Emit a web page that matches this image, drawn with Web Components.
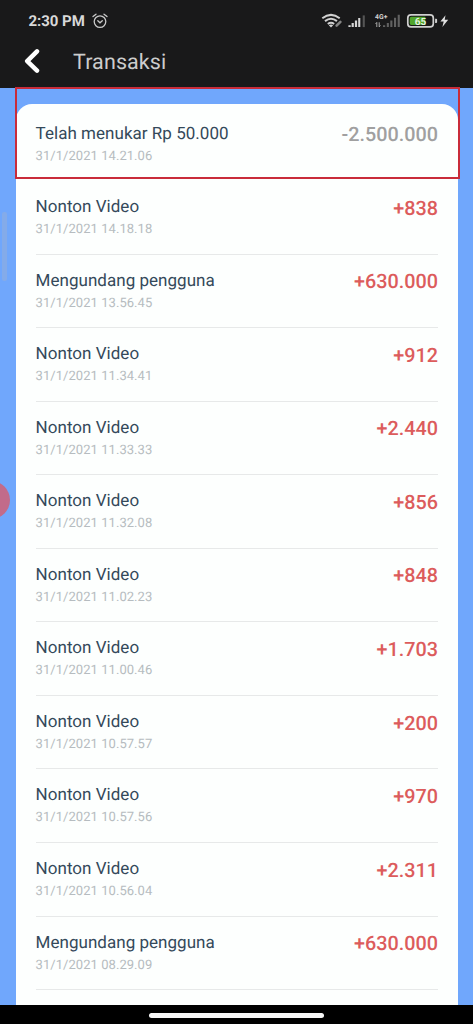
<!DOCTYPE html>
<html lang="id">
<head>
<meta charset="utf-8">
<title>Transaksi</title>
<style>
html,body{margin:0;height:100%;overflow:hidden;background:#000;font-family:Roboto,"Liberation Sans",sans-serif;text-rendering:geometricPrecision}
</style>
</head>
<body>
<transaction-app></transaction-app>
<script>
function define(name, html, setup) {
  const template = document.createElement('template');
  template.innerHTML = html;
  customElements.define(name, class extends HTMLElement {
    constructor() {
      super();
      this.attachShadow({mode: 'open'}).append(template.content.cloneNode(true));
    }
    connectedCallback() { if (setup) setup(this, this.shadowRoot); }
  });
}

define('status-bar', `
<style>
:host{display:flex;align-items:center;height:42px;padding:0 24px 0 28.5px;box-sizing:border-box;color:#d8d8d8}
.time{font-size:15px;font-weight:700;line-height:20px;letter-spacing:-.05px;white-space:nowrap;width:57px}
svg{display:block;flex:none}
.alarm{margin-left:6px}
.icons{margin-left:auto}
text{font-family:Roboto,sans-serif;font-weight:700}
</style>
<span class="time">2:30 PM</span>
<svg class="alarm" width="16" height="18" viewBox="0 0 16 18" fill="none" stroke="#c9c9c9" stroke-width="1.3" stroke-linecap="round"><circle cx="8" cy="9.6" r="5.8"/><path d="M1 4.6 4 2.2M15 4.6 12 2.2M5.8 8.7 8 10.8 10.3 8.7"/></svg>
<svg class="icons" width="129" height="20" viewBox="320 11 129 20">
<g fill="none" stroke="#d0d0d0" stroke-width="2"><path d="M322.3 18.2Q331 11.5 339.7 18.2M325 21.1Q331 16.5 337 21.1M327.8 24Q331 21.5 334.2 24"/></g>
<path d="M328.8 25.2 331 27.4 333.2 25.2Q331 23.8 328.8 25.2" fill="#d0d0d0"/>
<path d="m336 26 4.5-4.5" stroke="#181818" stroke-width="5"/><path d="m336.6 25.7 3.8-3.8" stroke="#858585" stroke-width="2.6" stroke-linecap="round"/>
<g fill="#d6d6d6"><path d="M348.4 25.2h2.3v1.9h-2.3zM351.6 22.9h2.2v4.2h-2.2zM354.9 20.5h2.2v6.6h-2.2zM358.2 18h2.1v9.1h-2.1z"/><path d="M362.7 15.4h2.1v11.7h-2.1z" fill="#555"/></g>
<text x="375" y="18.7" font-size="6.8" textLength="12.5" fill="#d0d0d0">4G+</text>
<path d="M376.8 27v-4.5m-1.2 1.4 1.2-1.5M379.2 22.3v4.6m1.2-1.5-1.2 1.5" fill="none" stroke="#aaa" stroke-width="1"/>
<path d="M383 25.2h2.2v1.9H383zM386.8 22.9h2.1v4.2h-2.1zM390.3 20.5h2.1v6.6h-2.1zM394 17.8h2.1v9.3H394zM397.7 14.7h2.1v12.4h-2.1z" fill="#616161"/>
<rect x="407.8" y="14.9" width="25.5" height="12" rx="3.2" fill="#171717" stroke="#d0d0d0" stroke-width="1.7"/>
<path d="M411.5 16.8h13.8v8.3h-13.8a1.8 1.8 0 0 1-1.8-1.8v-4.7a1.8 1.8 0 0 1 1.8-1.8" fill="#50a52c"/>
<path d="M435.1 18.7h1a1 1 0 0 1 1 1v2.4a1 1 0 0 1-1 1h-1z" fill="#d0d0d0"/>
<text x="420.6" y="24.9" font-size="10" text-anchor="middle" fill="#e4f2df">65</text>
<path d="m445.5 15.2-5.1 6.3h3.3l-1.3 5.5 5.8-7.2h-3.5z" fill="#e0e0e0"/>
</svg>`);

define('title-bar', `
<style>
:host{display:flex;align-items:center;height:45.5px;padding-left:24px;box-sizing:border-box;color:#ccc}
svg{display:block;flex:none}
h1{margin:0 0 3px 33px;font-size:21.5px;font-weight:400;line-height:28px;letter-spacing:.1px}
svg{margin-bottom:8px}
</style>
<svg width="16" height="26" viewBox="0 0 16 26" fill="none" stroke="#fff" stroke-width="4.5" stroke-linecap="round" stroke-linejoin="round"><path d="M13 3.3 3.2 13.1 13 22.6"/></svg>
<h1><slot></slot></h1>`);

define('transaction-row', `
<style>
:host{display:flex;justify-content:space-between;height:73.55px;flex:none;box-sizing:border-box;border-bottom:1.5px solid #e7e9e9}
.copy{padding-top:14px;margin-left:-.4px}
.title{font-size:17px;line-height:24px;letter-spacing:.03px;color:#34495a;white-space:nowrap}
.date{font-size:13px;line-height:18px;letter-spacing:.05px;color:#b6bcc0;margin-top:2px;white-space:nowrap}
.amount{padding-top:15.7px;font-size:19.8px;line-height:24px;font-weight:500;color:#dc5c5c}
:host([spent]) .amount{color:#a0a0a0}
:host([spent]){border-color:transparent}
</style>
<div class="copy"><div class="title"><slot></slot></div><div class="date"></div></div><div class="amount"></div>`,
(host, root) => {
  root.querySelector('.date').textContent = host.getAttribute('date');
  root.querySelector('.amount').textContent = host.getAttribute('amount');
});

define('transaction-card', `
<style>
:host{display:flex;flex-direction:column;box-sizing:border-box;margin:0 15px 0 16px;padding:4px 20px 0;height:100%;background:#fdfffe;border-radius:16px 16px 0 0}
</style><slot></slot>`);

define('home-indicator', `
<style>
:host{display:flex;justify-content:center;height:19px;background:#000;padding-top:8px;box-sizing:border-box}
span{width:175px;height:4.5px;border-radius:3px;background:#f7f7f7}
</style><span></span>`);

define('transaction-app', `
<style>
:host{display:grid;grid-template-rows:87.5px 1fr 19px;width:473px;height:1024px;position:relative;overflow:hidden}
header{background:#19191a}
main{background:#70a7fc;padding-top:16px;min-height:0;box-sizing:border-box;overflow:hidden}
.focus{position:absolute;left:15px;top:86.5px;width:445px;height:92px;box-sizing:border-box;border:2px solid #c92c3a}
.scroll{position:absolute;left:2px;top:212px;width:5px;height:69px;border-radius:2px;background:#84abe9}
.bubble{position:absolute;left:-28px;top:481px;width:38px;height:38px;border-radius:50%;background:#c26b8a}
</style>
<header><status-bar></status-bar><title-bar>Transaksi</title-bar></header>
<main><transaction-card></transaction-card></main>
<home-indicator></home-indicator>
<div class="focus"></div><div class="scroll"></div><div class="bubble"></div>`,
(host, root) => {
  const card = root.querySelector('transaction-card');
  [
    ['Telah menukar Rp 50.000', '14.21.06', '-2.500.000'],
    ['Nonton Video', '14.18.18', '+838'],
    ['Mengundang pengguna', '13.56.45', '+630.000'],
    ['Nonton Video', '11.34.41', '+912'],
    ['Nonton Video', '11.33.33', '+2.440'],
    ['Nonton Video', '11.32.08', '+856'],
    ['Nonton Video', '11.02.23', '+848'],
    ['Nonton Video', '11.00.46', '+1.703'],
    ['Nonton Video', '10.57.57', '+200'],
    ['Nonton Video', '10.57.56', '+970'],
    ['Nonton Video', '10.56.04', '+2.311'],
    ['Mengundang pengguna', '08.29.09', '+630.000']
  ].forEach(([title, time, amount]) => {
    const row = document.createElement('transaction-row');
    row.textContent = title;
    row.setAttribute('date', '31/1/2021 ' + time);
    row.setAttribute('amount', amount);
    if (amount[0] === '-') row.setAttribute('spent', '');
    card.append(row);
  });
});
</script>
</body>
</html>
